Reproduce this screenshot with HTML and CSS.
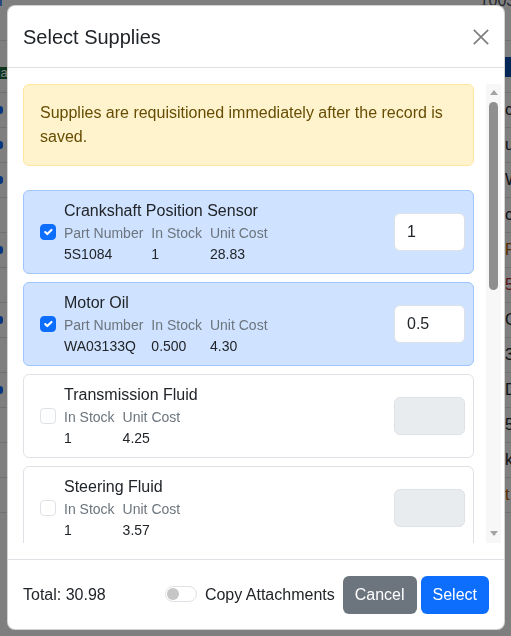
FILE: index.html
```html
<!DOCTYPE html>
<html lang="en">
<head>
<meta charset="utf-8">
<title>Select Supplies</title>
<link rel="stylesheet" href="styles.css">
</head>
<body>
<div class="page" aria-hidden="true">
  <div class="toolbar"><span class="tb-left">ar</span><span class="tb-right">1003 lee</span></div>
  <div class="row row-head"><span class="badge-green">Ra</span><span class="cell-blue">R</span></div>
  <div class="row"><span class="dot"></span><span class="edge">c</span></div>
  <div class="row"><span class="dot"></span><span class="edge">u</span></div>
  <div class="row"><span class="dot"></span><span class="edge">W</span></div>
  <div class="row"><span></span><span class="edge">c</span></div>
  <div class="row"><span class="dot"></span><span class="edge orange">F</span></div>
  <div class="row"><span></span><span class="edge red">5</span></div>
  <div class="row"><span class="dot"></span><span class="edge">C</span></div>
  <div class="row"><span></span><span class="edge">3C</span></div>
  <div class="row"><span class="dot"></span><span class="edge">D</span></div>
  <div class="row"><span></span><span class="edge">5</span></div>
  <div class="row"><span></span><span class="edge">k</span></div>
  <div class="row"><span></span><span class="edge orange">t</span></div>
</div>
<div class="backdrop"></div>

<div class="modal" role="dialog" aria-labelledby="modal-title">
  <div class="modal-header">
    <h5 class="modal-title" id="modal-title">Select Supplies</h5>
    <button class="btn-close" type="button" aria-label="Close">
      <svg width="16" height="16" viewBox="0 0 16 16" aria-hidden="true"><path d="M0.8 0.8 15.2 15.2M15.2 0.8 0.8 15.2" stroke="currentColor" stroke-width="1.7" fill="none"/></svg>
    </button>
  </div>

  <div class="modal-body">
    <div class="scroll">
      <div class="alert">Supplies are requisitioned immediately after the record is saved.</div>

      <div class="item selected">
        <span class="check"><svg viewBox="0 0 20 20" width="14" height="14" aria-hidden="true"><path d="m6 10 3 3 6-6" fill="none" stroke="#fff" stroke-width="3" stroke-linecap="round" stroke-linejoin="round"/></svg></span>
        <div class="info">
          <div class="name">Crankshaft Position Sensor</div>
          <div class="specs">
            <span class="label">Part Number</span><span>5S1084</span>
            <span class="label">In Stock</span><span>1</span>
            <span class="label">Unit Cost</span><span>28.83</span>
          </div>
        </div>
        <input class="qty" type="text" value="1">
      </div>

      <div class="item selected">
        <span class="check"><svg viewBox="0 0 20 20" width="14" height="14" aria-hidden="true"><path d="m6 10 3 3 6-6" fill="none" stroke="#fff" stroke-width="3" stroke-linecap="round" stroke-linejoin="round"/></svg></span>
        <div class="info">
          <div class="name">Motor Oil</div>
          <div class="specs">
            <span class="label">Part Number</span><span>WA03133Q</span>
            <span class="label">In Stock</span><span>0.500</span>
            <span class="label">Unit Cost</span><span>4.30</span>
          </div>
        </div>
        <input class="qty" type="text" value="0.5">
      </div>

      <div class="item">
        <span class="check"></span>
        <div class="info">
          <div class="name">Transmission Fluid</div>
          <div class="specs">
            <span class="label">In Stock</span><span>1</span>
            <span class="label">Unit Cost</span><span>4.25</span>
          </div>
        </div>
        <input class="qty" type="text" disabled>
      </div>

      <div class="item">
        <span class="check"></span>
        <div class="info">
          <div class="name">Steering Fluid</div>
          <div class="specs">
            <span class="label">In Stock</span><span>1</span>
            <span class="label">Unit Cost</span><span>3.57</span>
          </div>
        </div>
        <input class="qty" type="text" disabled>
      </div>
    </div>
    <div class="scrollbar" aria-hidden="true">
      <span class="arrow-up"></span>
      <span class="thumb"></span>
      <span class="arrow-down"></span>
    </div>
  </div>

  <div class="modal-footer">
    <span class="total">Total: 30.98</span>
    <label class="switch-wrap"><span class="switch"><span class="knob"></span></span>Copy Attachments</label>
    <button class="btn btn-secondary" type="button">Cancel</button>
    <button class="btn btn-primary" type="button">Select</button>
  </div>
</div>
</body>
</html>
```

FILE: styles.css
```css
* {
  box-sizing: border-box;
}

html, body {
  height: 100%;
}

body {
  margin: 0;
  font-family: "Liberation Sans", Arial, sans-serif;
  font-size: 16px;
  line-height: 1.5;
  color: #212529;
  background: #fff;
  overflow: hidden;
}

/* ---------- underlying page (dimmed) ---------- */
.page {
  width: 511px;
}

.toolbar {
  height: 47px;
  display: flex;
  justify-content: space-between;
  align-items: flex-start;
  border-bottom: 1px solid #dee2e6;
  font-size: 16px;
  line-height: 14px;
  margin-top: -6px;
}

.tb-left {
  color: #0d6efd;
  margin-left: -10px;
}

.tb-right {
  color: #495057;
  margin-right: -30px;
}

.row {
  height: 35px;
  display: flex;
  justify-content: space-between;
  align-items: center;
  border-bottom: 1px solid #dee2e6;
}

.row-head {
  height: 52px;
  align-items: flex-start;
  padding-top: 26px;
}

.badge-green {
  background: #1a6b3a;
  color: #fff;
  font-size: 13px;
  line-height: 12px;
  padding: 0 3px;
  margin-left: -12px;
}

.cell-blue {
  background: #0b4fb0;
  color: #fff;
  width: 20px;
  height: 20px;
  line-height: 20px;
  padding-left: 7px;
  margin-top: -10px;
  margin-right: -14px;
}

.dot {
  width: 6px;
  height: 8px;
  background: #0d6efd;
  border-radius: 3px;
  margin-left: -3px;
}

.edge {
  width: 14px;
  margin-right: -8px;
  overflow: hidden;
  color: #212529;
}

.orange {
  color: #b35c00;
}

.red {
  color: #b02a37;
}

.backdrop {
  position: fixed;
  inset: 0;
  background: rgba(0, 0, 0, 0.5);
}

/* ---------- modal ---------- */
.modal {
  position: fixed;
  left: 7px;
  top: 5px;
  width: 498px;
  height: 625px;
  display: flex;
  flex-direction: column;
  background: #fff;
  border: 1px solid rgba(0, 0, 0, 0.175);
  border-radius: 8px;
  overflow: hidden;
}

.modal-header {
  display: flex;
  align-items: center;
  padding: 16px 15px 15px 15px;
  border-bottom: 1px solid #dee2e6;
  flex: none;
}

.modal-title {
  margin: 0;
  font-size: 20px;
  line-height: 30px;
  font-weight: 400;
  color: #212529;
}

.btn-close {
  margin-left: auto;
  padding: 0;
  border: 0;
  background: none;
  width: 16px;
  height: 16px;
  color: #000;
  opacity: 0.5;
  display: flex;
}

.modal-body {
  flex: 1;
  min-height: 0;
  display: flex;
  padding: 16px 3px 16px 15px;
}

.scroll {
  flex: 1;
  min-width: 0;
  overflow: hidden;
  padding-right: 12px;
}

/* drawn scrollbar of the list */
.scrollbar {
  flex: none;
  width: 15px;
  background: #f7f7f7;
  display: flex;
  flex-direction: column;
  align-items: center;
  padding: 6px 0 7px;
}

.arrow-up {
  width: 0;
  height: 0;
  border-left: 4.5px solid transparent;
  border-right: 4.5px solid transparent;
  border-bottom: 5px solid #a3a3a3;
}

.thumb {
  width: 9px;
  height: 188px;
  margin-top: 7px;
  border-radius: 5px;
  background: #8f8f8f;
}

.arrow-down {
  width: 0;
  height: 0;
  margin-top: auto;
  border-left: 4.5px solid transparent;
  border-right: 4.5px solid transparent;
  border-top: 5px solid #a3a3a3;
}

.alert {
  padding: 16px;
  border: 1px solid #ffe69c;
  border-radius: 6px;
  background: #fff3cd;
  color: #664d03;
  margin-bottom: 24px;
}

.item {
  display: flex;
  align-items: center;
  padding: 8px 8px 8px 16px;
  border: 1px solid #dee2e6;
  border-radius: 6px;
  background: #fff;
  margin-bottom: 8px;
}

.item.selected {
  background: #cfe2ff;
  border-color: #9ec5fe;
}

.check {
  flex: none;
  width: 16px;
  height: 16px;
  margin-right: 8px;
  border: 1px solid #dee2e6;
  border-radius: 4px;
  background: #fff;
  display: flex;
  align-items: center;
  justify-content: center;
}

.item.selected .check {
  background: #0d6efd;
  border-color: #0d6efd;
}

.info {
  flex: 1;
  min-width: 0;
}

.name {
  line-height: 24px;
}

.specs {
  display: grid;
  grid-template-rows: auto auto;
  grid-auto-flow: column;
  justify-content: start;
  column-gap: 8px;
  font-size: 14px;
  line-height: 21px;
}

.label {
  color: #6c757d;
}

.qty {
  flex: none;
  width: 71px;
  height: 38px;
  padding: 6px 12px;
  border: 1px solid #dee2e6;
  border-radius: 6px;
  background: #fff;
  color: #212529;
  font: inherit;
  line-height: 24px;
}

.qty:disabled {
  background: #e9ecef;
}

/* ---------- footer ---------- */
.modal-footer {
  flex: none;
  height: 70px;
  display: flex;
  align-items: center;
  padding: 0 15px;
  border-top: 1px solid #dee2e6;
}

.total {
  margin-right: auto;
}

.switch-wrap {
  display: flex;
  align-items: center;
  gap: 8px;
  margin-right: 8px;
}

.switch {
  width: 32px;
  height: 16px;
  border: 1px solid #dee2e6;
  border-radius: 8px;
  display: flex;
  align-items: center;
  padding-left: 1px;
  margin-top: -2px;
}

.knob {
  width: 12px;
  height: 12px;
  border-radius: 50%;
  background: #c6c6c6;
}

.btn {
  padding: 6px 11px;
  border: 1px solid transparent;
  border-radius: 6px;
  font: inherit;
  line-height: 24px;
  color: #fff;
}

.btn + .btn {
  margin-left: 4px;
}

.btn-secondary {
  background: #6c757d;
}

.btn-primary {
  background: #0d6efd;
}
```
